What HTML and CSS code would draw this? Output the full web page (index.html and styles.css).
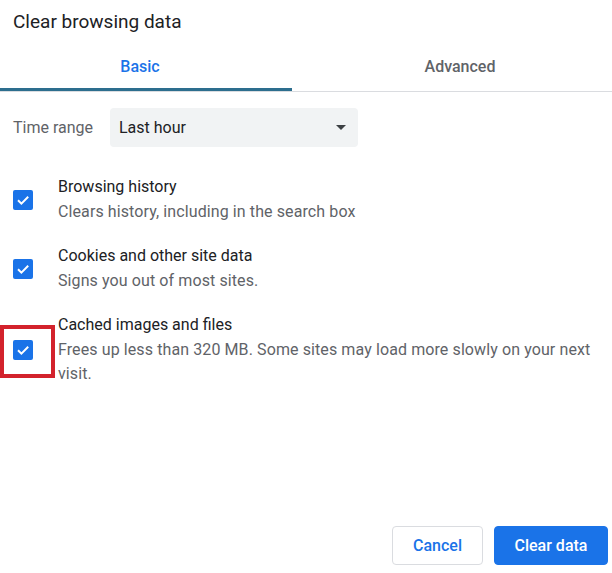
FILE: index.html
```html
<!DOCTYPE html>
<html lang="en">
<head>
    <meta charset="UTF-8">
    <meta name="viewport" content="width=device-width, initial-scale=1.0">
    <title>Clear browsing data</title>
    <link rel="stylesheet" href="styles.css">
</head>
<body>
    <div class="dialog">
        <h1 class="dialog-title">Clear browsing data</h1>

        <div class="tabs">
            <div class="tab active">Basic</div>
            <div class="tab">Advanced</div>
        </div>

        <div class="time-range">
            <span class="time-label">Time range</span>
            <div class="select">
                <span>Last hour</span>
                <span class="select-arrow"></span>
            </div>
        </div>

        <div class="options">
            <div class="option">
                <div class="checkbox-wrap">
                    <span class="checkbox">
                        <svg viewBox="0 0 20 20" width="20" height="20"><path d="M5 10.2l3.4 3.4L15.2 6.8" fill="none" stroke="#fff" stroke-width="2"/></svg>
                    </span>
                </div>
                <div class="option-text">
                    <div class="option-title">Browsing history</div>
                    <div class="option-desc">Clears history, including in the search box</div>
                </div>
            </div>

            <div class="option">
                <div class="checkbox-wrap">
                    <span class="checkbox">
                        <svg viewBox="0 0 20 20" width="20" height="20"><path d="M5 10.2l3.4 3.4L15.2 6.8" fill="none" stroke="#fff" stroke-width="2"/></svg>
                    </span>
                </div>
                <div class="option-text">
                    <div class="option-title">Cookies and other site data</div>
                    <div class="option-desc">Signs you out of most sites.</div>
                </div>
            </div>

            <div class="option">
                <div class="checkbox-wrap">
                    <span class="checkbox">
                        <svg viewBox="0 0 20 20" width="20" height="20"><path d="M5 10.2l3.4 3.4L15.2 6.8" fill="none" stroke="#fff" stroke-width="2"/></svg>
                    </span>
                    <span class="highlight"></span>
                </div>
                <div class="option-text">
                    <div class="option-title">Cached images and files</div>
                    <div class="option-desc">Frees up less than 320 MB. Some sites may load more slowly on your next visit.</div>
                </div>
            </div>
        </div>

        <div class="footer">
            <button class="btn">Cancel</button>
            <button class="btn primary">Clear data</button>
        </div>
    </div>
</body>
</html>
```

FILE: styles.css
```css
body {
    margin: 0;
    font-family: Roboto, 'Liberation Sans', Arial, sans-serif;
    background-color: #ffffff;
    color: #202124;
}

.dialog {
    height: 573px;
    display: flex;
    flex-direction: column;
    overflow: hidden;
}

.dialog-title {
    margin: 0;
    padding: 10px 13px;
    font-size: 19px;
    font-weight: 400;
    line-height: 24px;
    color: #202124;
}

.tabs {
    display: flex;
    border-bottom: 1px solid #dadce0;
}

.tab {
    padding: 11px 0 9px;
    font-size: 16px;
    font-weight: 500;
    line-height: 24px;
    text-align: center;
    color: #5f6368;
    border-bottom: 3px solid transparent;
}

.tab:first-child {
    width: 292px;
    padding-right: 12px;
    box-sizing: border-box;
}

.tab:last-child {
    flex: 1;
    padding-left: 16px;
}

.tab.active {
    color: #1a73e8;
    border-bottom-color: #2d6e8e;
}

.time-range {
    display: flex;
    align-items: center;
    margin-top: 16px;
    padding-left: 13px;
}

.time-label {
    width: 97px;
    font-size: 16px;
    color: #5f6368;
}

.select {
    display: flex;
    align-items: center;
    justify-content: space-between;
    width: 248px;
    height: 39px;
    box-sizing: border-box;
    padding: 0 12px 0 9px;
    background-color: #f1f3f4;
    border-radius: 4px;
    font-size: 16px;
    color: #202124;
}

.select-arrow {
    width: 0;
    height: 0;
    border-left: 5px solid transparent;
    border-right: 5px solid transparent;
    border-top: 5px solid #3c4043;
}

.options {
    display: flex;
    flex-direction: column;
    gap: 20px;
    margin-top: 28px;
}

.option {
    display: flex;
    align-items: center;
}

.checkbox-wrap {
    position: relative;
    width: 58px;
    flex-shrink: 0;
    padding-left: 13px;
    box-sizing: border-box;
}

.checkbox {
    display: block;
    width: 20px;
    height: 20px;
    background-color: #1a73e8;
    border-radius: 2px;
}

.checkbox svg {
    display: block;
}

.highlight {
    position: absolute;
    left: 0;
    top: -15px;
    width: 55px;
    height: 53px;
    box-sizing: border-box;
    border: 4px solid #d3222c;
}

.option-text {
    width: 545px;
    font-size: 16px;
    line-height: 24.5px;
}

.option-title {
    color: #202124;
}

.option-desc {
    color: #5f6368;
    letter-spacing: 0.1px;
}

.footer {
    margin-top: auto;
    display: flex;
    justify-content: flex-end;
    gap: 11px;
    padding: 0 4px 8px 0;
}

.btn {
    height: 39px;
    padding: 0;
    border: 1px solid #dadce0;
    border-radius: 4px;
    background-color: #ffffff;
    color: #1a73e8;
    font-family: Roboto, 'Liberation Sans', Arial, sans-serif;
    font-size: 16px;
    font-weight: 500;
    white-space: nowrap;
}

.btn:first-child {
    width: 91px;
}

.btn.primary {
    width: 114px;
    background-color: #1a73e8;
    border-color: #1a73e8;
    color: #ffffff;
}
```
